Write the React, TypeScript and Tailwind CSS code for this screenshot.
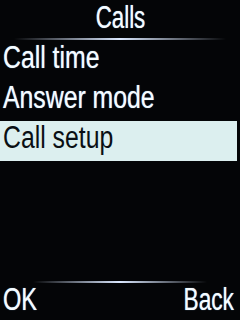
const items = ['Call time', 'Answer mode', 'Call setup'];

const Divider = ({ inset }: { inset: string }) => (
  <div className={`h-[2px] ${inset} bg-gradient-to-r from-transparent via-[#dbe8ff] to-transparent`} />
);

export default function App() {
  const selected = 2;
  return (
    <div className="w-[240px] h-[320px] bg-[#040507] text-[#f6fcff] [text-shadow:0_0_1px_rgba(150,205,255,0.9)] flex flex-col overflow-hidden font-['Liberation_Sans',Arial,sans-serif] text-[31px]">
      <div className="h-[38px] flex items-start justify-center leading-[35px]">
        <span className="inline-block scale-x-[0.72]">Calls</span>
      </div>
      <Divider inset="mx-[14px]" />
      <div className="flex flex-col mt-[1px]">
        {items.map((item, i) => (
          <div
            key={item}
            className={`h-[40px] leading-[34px] pl-[3px] mr-[3px] ${i === selected ? 'bg-[#dcefef] text-[#0a0f14] [text-shadow:none]' : ''}`}
          >
            <span className="inline-block origin-left scale-x-[0.8] whitespace-nowrap">{item}</span>
          </div>
        ))}
      </div>
      <div className="flex-1" />
      <Divider inset="mx-[33px]" />
      <div className="h-[37px] flex justify-between items-start pl-[3px] pr-[6px] leading-[34px]">
        <span className="inline-block origin-left scale-x-[0.76]">OK</span>
        <span className="inline-block origin-right scale-x-[0.73]">Back</span>
      </div>
    </div>
  );
}
